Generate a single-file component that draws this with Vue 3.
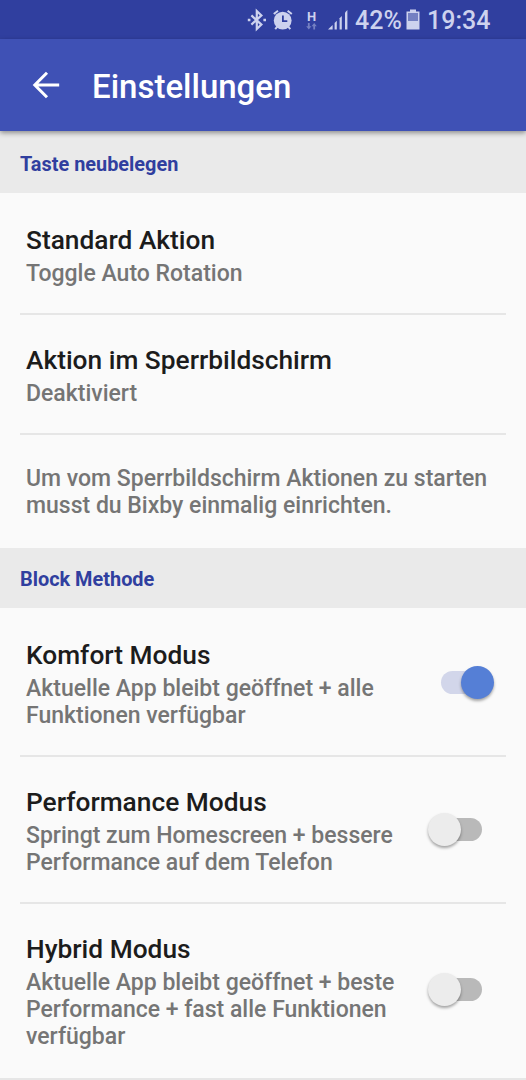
<template>
  <div class="screen">
    <div class="status-bar">
      <svg class="bluetooth" width="20" height="24" viewBox="0 0 20 24" fill="none" stroke="#cdd2ee">
        <path d="M4.4 7.4 L14.4 16.6 L9.8 21 V3 L14.4 7.4 L4.4 16.6" stroke-width="2.2" />
        <path d="M0.8 12 h2.6 M16.4 12 h2.6" stroke-width="2.6" />
      </svg>
      <svg class="alarm" width="20" height="24" viewBox="0 0 20 24" fill="none" stroke="#cdd2ee">
        <circle cx="9.7" cy="12.6" r="8.9" fill="#cdd2ee" stroke="none" />
        <path d="M0.8 6 L5 2.7 M14.6 2.7 L18.8 6" stroke-width="2" />
        <path d="M4.3 18.6 L2.2 21.2 M15.2 18.6 L17.3 21.2" stroke-width="2" />
        <path d="M9.9 7.6 V13.2 H14.3" stroke="#303f9f" stroke-width="1.8" />
      </svg>
      <div class="network">
        <span>H</span>
        <svg width="11" height="7" viewBox="0 0 11 7" fill="#7480c2">
          <path d="M1.9 0 h1.8 v3.2 h1.7 L2.8 6.4 L0.2 3.2 h1.7 z" />
          <path d="M7.3 6.4 h1.8 V3.2 h1.7 L8.2 0 L5.6 3.2 h1.7 z" />
        </svg>
      </div>
      <svg class="signal" width="21" height="21" viewBox="0 0 21 21" fill="#cdd2ee">
        <path d="M0 20.6 L4.6 16 V20.6 z" />
        <path d="M6.6 14 L8.8 11.8 V20.6 H6.6 z" />
        <path d="M11.6 9.2 L13.8 7 V20.6 H11.6 z" />
        <path d="M17 3.4 L19.4 1 V20.6 H17 z" />
      </svg>
      <span class="percent">42%</span>
      <svg class="battery" width="14" height="21" viewBox="0 0 14 21">
        <path d="M4 0.5 h6 v2 h3.5 v18 h-13 v-18 h3.5 z" fill="#cdd2ee" />
        <rect x="2" y="4" width="10" height="8" fill="#7480c2" />
      </svg>
      <span class="clock">19:34</span>
    </div>

    <div class="toolbar">
      <svg width="28" height="28" viewBox="0 0 28 28" fill="none" stroke="#fff" stroke-width="3">
        <path d="M27.2 14 H3 M15 1.8 L2.8 14 L15 26.2" />
      </svg>
      <h1>Einstellungen</h1>
    </div>

    <h2 class="section-title first">Taste neubelegen</h2>
    <div v-for="action in actions" :key="action.title" class="item">
      <div class="item-text">
        <h3>{{ action.title }}</h3>
        <p>{{ action.summary }}</p>
      </div>
    </div>
    <p class="note">Um vom Sperrbildschirm Aktionen zu starten<br />musst du Bixby einmalig einrichten.</p>

    <h2 class="section-title">Block Methode</h2>
    <div v-for="mode in modes" :key="mode.title" class="item mode" @click="selectMode(mode)">
      <div class="item-text">
        <h3>{{ mode.title }}</h3>
        <p>{{ mode.summary }}</p>
      </div>
      <div class="switch" :class="{ on: mode.enabled }">
        <div class="track"></div>
        <div class="thumb"></div>
      </div>
    </div>
  </div>
</template>

<script setup>
import { ref } from 'vue';

const actions = ref([
  { title: 'Standard Aktion', summary: 'Toggle Auto Rotation' },
  { title: 'Aktion im Sperrbildschirm', summary: 'Deaktiviert' },
]);

const modes = ref([
  {
    title: 'Komfort Modus',
    summary: 'Aktuelle App bleibt geöffnet + alle\nFunktionen verfügbar',
    enabled: true,
  },
  {
    title: 'Performance Modus',
    summary: 'Springt zum Homescreen + bessere\nPerformance auf dem Telefon',
    enabled: false,
  },
  {
    title: 'Hybrid Modus',
    summary: 'Aktuelle App bleibt geöffnet + beste\nPerformance + fast alle Funktionen\nverfügbar',
    enabled: false,
  },
]);

// Only one block method can be active at a time
const selectMode = (selected) => {
  modes.value.forEach((mode) => {
    mode.enabled = mode === selected;
  });
};
</script>

<style>
body {
  background-color: #fafafa;
}
</style>

<style scoped>
.screen {
  width: 526px;
  height: 1080px;
  overflow: hidden;
  background-color: #fafafa;
  font-family: Roboto, sans-serif;
  font-weight: 500;
}

h1,
h2,
h3,
p {
  margin: 0;
  font-weight: 500;
}

.status-bar {
  display: flex;
  align-items: center;
  box-sizing: border-box;
  height: 39px;
  padding-left: 247px;
  background-color: #303f9f;
  color: #cdd2ee;
  font-size: 25px;
  white-space: nowrap;
}

.status-bar svg {
  flex: none;
}

.alarm {
  margin-left: 6px;
}

.network {
  display: flex;
  flex-direction: column;
  align-items: center;
  width: 11px;
  margin-left: 13px;
  font-size: 13px;
  font-weight: 700;
  line-height: 13px;
}

.signal {
  margin-left: 11px;
}

.percent,
.clock {
  padding-top: 2px;
}

.percent {
  width: 46px;
  margin-left: 6px;
}

.battery {
  margin-left: 5px;
}

.clock {
  margin-left: 7px;
}

.toolbar {
  display: flex;
  align-items: center;
  position: relative;
  height: 92px;
  padding-left: 32px;
  background-color: #3f51b5;
  box-shadow: 0 2px 5px rgba(0, 0, 0, 0.4);
}

.toolbar h1 {
  margin: 4px 0 0 32px;
  color: #fff;
  font-size: 33px;
  line-height: 40px;
}

.section-title {
  height: 60px;
  padding-left: 20px;
  background-color: #eaeaea;
  color: #303f9f;
  font-size: 19.9px;
  font-weight: 700;
  line-height: 63px;
}

.section-title.first {
  height: 62px;
  line-height: 67px;
}

.item {
  display: flex;
  justify-content: space-between;
  align-items: flex-start;
  box-sizing: border-box;
  height: 120px;
  margin: 0 20px;
  padding: 30px 12px 0 6px;
  border-bottom: 2px solid #e6e6e6;
}

.section-title + .item {
  padding-top: 32px;
}

.section-title.first + .item {
  height: 122px;
}

.item h3 {
  color: #1c1c1c;
  font-size: 26.3px;
  line-height: 31px;
}

.item p {
  margin-top: 4px;
  color: #757575;
  font-size: 23px;
  line-height: 27px;
  white-space: pre-line;
}

.mode {
  height: 147px;
}

.section-title + .mode {
  height: 149px;
}

.mode:last-child {
  height: 176px;
  margin: 0;
  padding: 30px 32px 0 26px;
}

.note {
  box-sizing: border-box;
  height: 113px;
  padding: 30px 26px 0;
  color: #757575;
  font-size: 23px;
  line-height: 27px;
}

.switch {
  display: flex;
  align-items: center;
  position: relative;
  width: 66px;
  height: 33px;
  margin-top: 26px;
}

.mode:last-child .switch {
  margin-top: 39px;
}

.track {
  width: 41px;
  height: 23px;
  margin-left: 13px;
  border-radius: 12px;
  background-color: #b9b9b9;
}

.thumb {
  position: absolute;
  top: 0;
  left: 0;
  width: 33px;
  height: 33px;
  border-radius: 50%;
  background-color: #ececec;
  box-shadow: 0 2px 3px rgba(0, 0, 0, 0.35);
}

.on .thumb {
  left: 33px;
  background-color: #557fd6;
}

.on .track {
  background-color: #d2d6ea;
}
</style>
